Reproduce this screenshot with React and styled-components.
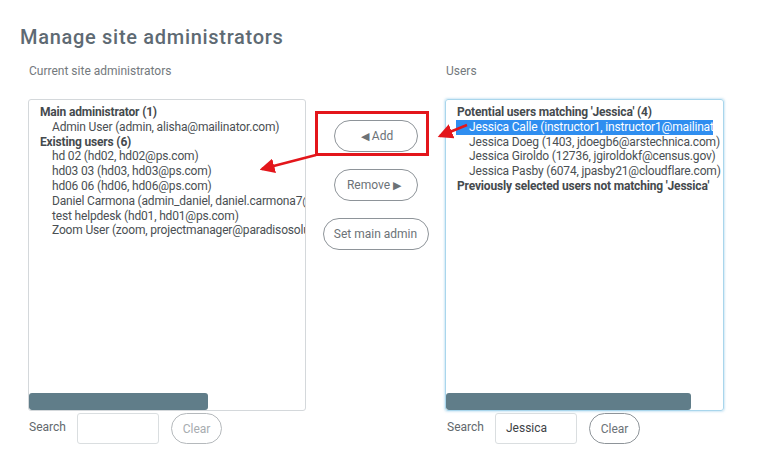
import React from 'react'
import styled, { createGlobalStyle } from 'styled-components'

const GlobalStyle = createGlobalStyle`
  html, body {
    margin: 0;
    padding: 0;
    background: #ffffff;
    font-family: Roboto, 'Liberation Sans', sans-serif;
  }
`

const Page = styled.div`
  position: relative;
  width: 762px;
  height: 451px;
  padding: 26px 0 0 20px;
  box-sizing: border-box;
`

const Title = styled.h2`
  margin: 0;
  font-size: 20px;
  font-weight: 500;
  line-height: 22px;
  letter-spacing: 0.7px;
  color: #5e6a73;
`

const Columns = styled.div`
  display: grid;
  grid-template-columns: 278px 139px 279px;
  margin: 16px 0 0 8px;
`

const Column = styled.div`
  display: flex;
  flex-direction: column;
`

const Caption = styled.div`
  height: 35px;
  padding-left: ${(p) => p.$indent || 1}px;
  font-size: 12px;
  line-height: 14px;
  color: #74797d;
`

const ListBox = styled.div`
  display: flex;
  flex-direction: column;
  height: 312px;
  box-sizing: border-box;
  border: 1px solid ${(p) => (p.$focused ? '#a9d6ec' : '#d4d8db')};
  border-radius: 3px;
  box-shadow: ${(p) => (p.$focused ? '0 0 2px 1px rgba(120, 190, 225, 0.35)' : 'none')};
  overflow: hidden;
`

const Options = styled.div`
  flex: 1;
  padding: 5px 0 0 11px;
  overflow: hidden;
  font-size: 12px;
  line-height: 14.8px;
  letter-spacing: -0.17px;
  color: #4a4f53;
  white-space: nowrap;
`

const Group = styled.div`
  font-weight: 700;
  color: #454a4e;
`

const Option = styled.div`
  padding-left: ${(p) => (p.$selected ? 13 : 12)}px;
  ${(p) =>
    p.$selected &&
    `
    width: 257px;
    margin-left: -1px;
    box-sizing: border-box;
    overflow: hidden;
    background: #2f8ef0;
    color: #ffffff;
  `}
`

const Track = styled.div`
  height: 17px;
  padding-left: ${(p) => p.$offset}px;
`

const Thumb = styled.div`
  width: ${(p) => p.$width}px;
  height: 17px;
  border-radius: 3px;
  background: #607d89;
`

const SearchRow = styled.div`
  display: flex;
  align-items: center;
  margin-top: 2px;
  padding-left: ${(p) => p.$indent || 1}px;
`

const SearchLabel = styled.span`
  width: 48px;
  font-size: 12px;
  color: #62686d;
  margin-top: -4px;
`

const SearchInput = styled.div`
  width: 82px;
  height: 31px;
  box-sizing: border-box;
  border: 1px solid #dadee0;
  border-radius: 3px;
  padding: 0 10px;
  font-size: 12px;
  line-height: 29px;
  color: #3d4246;
`

const Actions = styled.div`
  display: flex;
  flex-direction: column;
  align-items: center;
  gap: 17px;
  padding-top: 56px;
`

const PillButton = styled.button`
  width: ${(p) => p.$width}px;
  height: ${(p) => p.$height || 32}px;
  border: 1px solid ${(p) => (p.disabled ? '#b5b9bc' : '#8e9499')};
  border-radius: 16px;
  background: #ffffff;
  font-family: Roboto, 'Liberation Sans', sans-serif;
  font-size: 12px;
  white-space: nowrap;
  color: ${(p) => (p.disabled ? '#a7acb0' : '#6c7277')};
  padding: 0;
  cursor: pointer;
`

const Arrow = styled.span`
  font-size: 11px;
  margin: 0 3px;
`

const ClearButton = styled(PillButton)`
  margin-left: 12px;
`

const Annotations = styled.svg`
  position: absolute;
  left: 0;
  top: 0;
  pointer-events: none;
`

const currentAdmins = [
  'hd 02 (hd02, hd02@ps.com)',
  'hd03 03 (hd03, hd03@ps.com)',
  'hd06 06 (hd06, hd06@ps.com)',
  'Daniel Carmona (admin_daniel, daniel.carmona7@paradisosolutions.com)',
  'test helpdesk (hd01, hd01@ps.com)',
  'Zoom User (zoom, projectmanager@paradisosolutions.com)',
]

const matchingUsers = [
  'Jessica Calle (instructor1, instructor1@mailinator.com)',
  'Jessica Doeg (1403, jdoegb6@arstechnica.com)',
  'Jessica Giroldo (12736, jgiroldokf@census.gov)',
  'Jessica Pasby (6074, jpasby21@cloudflare.com)',
]

export default function App() {
  return (
    <Page>
      <GlobalStyle />
      <Title>Manage site administrators</Title>
      <Columns>
        <Column>
          <Caption>Current site administrators</Caption>
          <ListBox>
            <Options>
              <Group>Main administrator (1)</Group>
              <Option>Admin User (admin, alisha@mailinator.com)</Option>
              <Group>Existing users (6)</Group>
              {currentAdmins.map((u) => (
                <Option key={u}>{u}</Option>
              ))}
            </Options>
            <Track $offset={0}>
              <Thumb $width={179} />
            </Track>
          </ListBox>
          <SearchRow>
            <SearchLabel>Search</SearchLabel>
            <SearchInput />
            <ClearButton $width={51} $height={31} disabled>
              Clear
            </ClearButton>
          </SearchRow>
        </Column>

        <Actions>
          <PillButton $width={84}>
            <Arrow>◀</Arrow>Add
          </PillButton>
          <PillButton $width={84}>
            Remove<Arrow>▶</Arrow>
          </PillButton>
          <PillButton $width={106}>Set main admin</PillButton>
        </Actions>

        <Column>
          <Caption $indent={1}>Users</Caption>
          <ListBox $focused>
            <Options>
              <Group>Potential users matching 'Jessica' (4)</Group>
              {matchingUsers.map((u, i) => (
                <Option key={u} $selected={i === 0}>
                  {u}
                </Option>
              ))}
              <Group>Previously selected users not matching 'Jessica'</Group>
            </Options>
            <Track $offset={0}>
              <Thumb $width={245} />
            </Track>
          </ListBox>
          <SearchRow $indent={2}>
            <SearchLabel>Search</SearchLabel>
            <SearchInput>Jessica</SearchInput>
            <ClearButton $width={51} $height={31}>
              Clear
            </ClearButton>
          </SearchRow>
        </Column>
      </Columns>

      <Annotations width="762" height="451" viewBox="0 0 762 451">
        <defs>
          <marker id="head" markerWidth="6" markerHeight="6" refX="5" refY="3" orient="auto" markerUnits="strokeWidth">
            <path d="M0,0 L6,3 L0,6 Z" fill="#e3161b" />
          </marker>
        </defs>
        <rect x="316.5" y="112.5" width="111" height="42" fill="none" stroke="#e3161b" strokeWidth="3" />
        <line x1="316" y1="155" x2="262" y2="169" stroke="#e3161b" strokeWidth="2.5" markerEnd="url(#head)" />
        <line x1="467" y1="125" x2="440" y2="136" stroke="#e3161b" strokeWidth="2.5" markerEnd="url(#head)" />
      </Annotations>
    </Page>
  )
}
